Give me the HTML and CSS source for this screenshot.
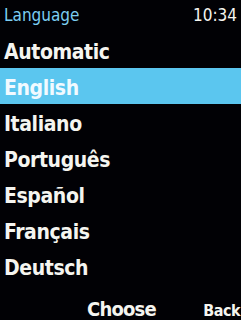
FILE: index.html
```html
<!DOCTYPE html>
<html>
<head>
	<title>Language</title>
	<meta name="viewport" content="width=device-width, initial-scale=1.0" />
	<link rel="stylesheet" href="styles.css">
</head>
<body>
	<div class="phone">
		<header class="status">
			<span class="title">Language</span>
			<span class="clock">10:34</span>
		</header>
		<ul class="menu">
			<li>Automatic</li>
			<li class="selected">English</li>
			<li>Italiano</li>
			<li>Português</li>
			<li>Español</li>
			<li>Français</li>
			<li>Deutsch</li>
		</ul>
		<footer class="softkeys">
			<span></span>
			<span class="key">Choose</span>
			<span class="key back">Back</span>
		</footer>
	</div>
</body>
</html>
```
FILE: styles.css
```css
html, body {
	margin: 0;
	width: 100%;
	height: 100%;
	background: #000;
}
.phone {
	width: 241px;
	height: 320px;
	background: #010105;
	color: #f5f5f0;
	font-family: "DejaVu Sans Condensed", "DejaVu Sans", sans-serif;
	display: flex;
	flex-direction: column;
	overflow: hidden;
}
.status {
	display: flex;
	justify-content: space-between;
	height: 32px;
	line-height: 30px;
	font-size: 17px;
	padding: 0 4px 0 4px;
	box-sizing: border-box;
}
.title {
	color: #7ccdf2;
}
.clock {
	color: #f5f5f0;
}
.menu {
	list-style: none;
	margin: 0;
	padding: 0;
}
.menu li {
	height: 36px;
	box-sizing: border-box;
	padding: 4px 0 0 4px;
	line-height: 32px;
	font-size: 21px;
	font-weight: bold;
	letter-spacing: -0.4px;
}
.menu li.selected {
	background: #5bc6ef;
	color: #f2faff;
}
.softkeys {
	display: grid;
	grid-template-columns: 1fr auto 1fr;
	align-items: baseline;
	height: 36px;
	box-sizing: border-box;
	padding: 15px 1px 0 3px;
	line-height: 21px;
	font-size: 20px;
	font-weight: bold;
	letter-spacing: -0.8px;
}
.back {
	justify-self: end;
	font-size: 16px;
	letter-spacing: -0.5px;
}
```
